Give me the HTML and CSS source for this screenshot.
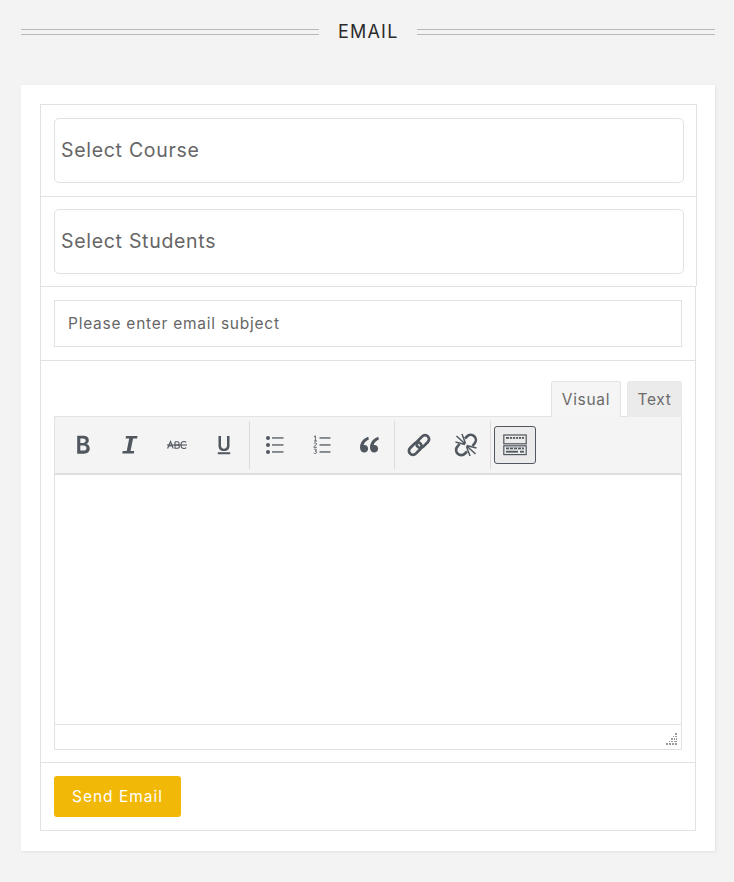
FILE: index.html
```html
<!DOCTYPE html>
<html lang="en">
<head>
<meta charset="utf-8">
<title>Email</title>
<link rel="stylesheet" href="styles.css">
</head>
<body>
<main class="page">
  <header class="heading">
    <span class="rule"></span>
    <h1 class="heading-text">EMAIL</h1>
    <span class="rule"></span>
  </header>
  <section class="card">
    <div class="row row-select row-first">
      <div class="select">Select Course</div>
    </div>
    <div class="row row-select">
      <div class="select">Select Students</div>
    </div>
    <div class="group">
      <div class="row row-subject">
        <div class="subject">Please enter email subject</div>
      </div>
      <div class="row row-editor">
        <div class="tabs">
          <span class="tab tab-active">Visual</span>
          <span class="tab">Text</span>
        </div>
        <div class="editor">
          <div class="toolbar">
            <div class="tool-group tool-group-first">
              <span class="tool">
                <svg class="icon" viewBox="0 0 20 20"><path fill="#50575e" d="M4.200 .8h6.300c3.400 0 5.300 1.600 5.300 4.400 0 1.900-1 3.300-2.700 3.900 2.300.5 3.600 2.100 3.600 4.400 0 3.200-2.300 5.200-5.900 5.200H4.200zm3.100 2.600v4.500h2.700c1.700 0 2.700-.9 2.700-2.300S11.700 3.400 10 3.400zm0 7v5.200h3.100c2 0 3.100-1 3.100-2.600s-1.100-2.600-3.200-2.600z"/></svg>
              </span>
              <span class="tool">
                <svg class="icon" viewBox="0 0 20 20"><path fill="#50575e" d="M6 1h11.500l-.4 2.400h-4L10.500 16h3.700l-.4 2.400H2.300l.4-2.400h4L9.200 3.400H5.600z"/></svg>
              </span>
              <span class="tool">
                <svg class="icon" viewBox="0 0 20 20"><g fill="none" stroke="#50575e" stroke-width="1.100"><path d="M.6 13.500 3.500 6.500 6.300 13.500M1.600 11h3.800"/><path d="M8 6.800v6.400h2.600c1.200 0 1.900-.7 1.900-1.700S11.800 10 10.600 10H8m0 0h2.400c1 0 1.700-.6 1.700-1.600S11.400 6.800 10.400 6.800H8"/><path d="M19.300 7.400c-.6-.6-1.300-.9-2.200-.9-1.900 0-3.100 1.400-3.100 3.500s1.200 3.500 3.100 3.500c.9 0 1.600-.3 2.200-.9"/><path d="M0 10h20"/></g></svg>
              </span>
              <span class="tool">
                <svg class="icon" viewBox="0 0 20 20"><path fill="#50575e" d="M4.500 1h2.500v9.500c0 2 1.100 3.200 3 3.200s3-1.200 3-3.200V1h2.500v9.700c0 3.300-2.100 5.300-5.500 5.300s-5.500-2-5.500-5.300zM3.800 17.300h12.400v1.900H3.800z"/></svg>
              </span>
            </div>
            <div class="tool-group">
              <span class="tool">
                <svg class="icon" viewBox="0 0 20 20"><g fill="#50575e"><circle cx="3" cy="3" r="2"/><circle cx="3" cy="10" r="2"/><circle cx="3" cy="17" r="2"/><rect x="7" y="2.300" width="11.500" height="1.300"/><rect x="7" y="9.300" width="11.500" height="1.300"/><rect x="7" y="16.300" width="11.500" height="1.300"/></g></svg>
              </span>
              <span class="tool">
                <svg class="icon" viewBox="0 0 20 20"><g fill="#50575e"><rect x="7.500" y="2.300" width="11" height="1.300"/><rect x="7.500" y="9.300" width="11" height="1.300"/><rect x="7.500" y="16.300" width="11" height="1.300"/></g><g fill="none" stroke="#50575e" stroke-width=".9"><path d="M2 1.800 3.400 .8v5.200M2 6h3"/><path d="M1.800 8.600c.4-1 2.800-1 2.800.4 0 1.100-2.800 2-2.800 3.300h3"/><path d="M1.900 14.500c.7-.7 2.600-.6 2.600.6 0 .7-.6 1-1.400 1 .9 0 1.600.4 1.600 1.200 0 1.300-2.200 1.500-3 .7"/></g></svg>
              </span>
              <span class="tool">
                <svg class="icon" viewBox="0 0 20 20"><g fill="#50575e"><path d="M9.200 1.800C5 3.300 1 7 1 12.600c0 3 1.800 5 4.200 5 2.200 0 3.900-1.700 3.900-3.900 0-2.100-1.500-3.700-3.500-3.700-.3 0-.7 0-1 .1.700-2.300 2.700-4.300 5.300-5.500z"/><path d="M19.200 1.800C15 3.300 11 7 11 12.600c0 3 1.800 5 4.200 5 2.200 0 3.900-1.700 3.900-3.900 0-2.100-1.500-3.700-3.500-3.700-.3 0-.7 0-1 .1.700-2.300 2.700-4.300 5.300-5.500z"/></g></svg>
              </span>
            </div>
            <div class="tool-group tool-group-links">
              <span class="tool">
                <svg class="icon-lg" viewBox="0 0 24 24"><g fill="none" stroke="#50575e" stroke-width="2.800"><rect x="1" y="11.500" width="14.500" height="8" rx="4" transform="rotate(-45 8.250 15.500)"/><rect x="8.500" y="4.500" width="14.500" height="8" rx="4" transform="rotate(-45 15.750 8.500)"/></g></svg>
              </span>
              <span class="tool">
                <svg class="icon-lg" viewBox="0 0 24 24"><g fill="none" stroke="#50575e"><path stroke-width="2.600" d="M11 5.500 13 3.500a5 5 0 0 1 7.500 7L18.500 13"/><path stroke-width="2.600" d="M13 18.500 11 20.500a5 5 0 0 1-7.500-7L5.500 11"/><path stroke-width="1.500" d="M11 11.500 1.500 9M11.200 11 2.500 3M11.500 10.500 8 1M12.500 12.500 22.500 15M12.800 13 21.500 21M12.500 13.500 16 23"/></g></svg>
              </span>
            </div>
            <div class="tool-group tool-group-last">
              <span class="tool tool-on">
                <svg class="icon-kbd" viewBox="0 0 24 22"><g fill="none" stroke="#50575e" stroke-width="1.200"><rect x=".8" y="1" width="22.400" height="8.800"/><rect x=".8" y="11.800" width="22.400" height="8.800"/></g><g fill="#50575e"><rect x="3" y="3" width="18" height="1.800"/><rect x="3" y="13.500" width="18" height="1.800"/><rect x="3" y="16.800" width="12" height="1.800"/><rect x="17" y="16.800" width="4" height="1.800"/></g><g fill="#ebebeb"><rect x="6" y="3" width="1" height="1.800"/><rect x="9" y="3" width="1" height="1.800"/><rect x="12" y="3" width="1" height="1.800"/><rect x="15" y="3" width="1" height="1.800"/><rect x="18" y="3" width="1" height="1.800"/><rect x="6" y="13.500" width="1" height="1.800"/><rect x="10" y="13.500" width="1" height="1.800"/><rect x="14" y="13.500" width="1" height="1.800"/><rect x="18" y="13.500" width="1" height="1.800"/></g></svg>
              </span>
            </div>
          </div>
          <div class="edit-area"></div>
          <div class="statusbar">
            <svg class="grip" viewBox="0 0 12 12"><g fill="#9a9a9a"><rect x="9" y="0" width="2" height="2"/><rect x="7" y="3" width="1" height="1"/><rect x="9" y="3" width="2" height="1"/><rect x="5" y="5" width="2" height="2"/><rect x="8" y="5" width="1" height="2"/><rect x="10" y="5" width="1" height="2"/><rect x="3" y="8" width="1" height="1"/><rect x="5" y="8" width="2" height="1"/><rect x="8" y="8" width="3" height="1"/><rect x="0" y="10" width="2" height="2"/><rect x="3" y="10" width="2" height="2"/><rect x="6" y="10" width="2" height="2"/><rect x="9" y="10" width="2" height="2"/></g></svg>
          </div>
        </div>
      </div>
      <div class="row row-action">
        <button class="send" type="button">Send Email</button>
      </div>
    </div>
  </section>
</main>
</body>
</html>
```
FILE: styles.css
```css
* { box-sizing: border-box; }
html, body { margin: 0; padding: 0; }
body {
  background: #f3f3f3;
  font-family: Inter, "Open Sans", "Liberation Sans", sans-serif;
  color: #666;
}
.page { width: 734px; height: 882px; padding: 0 19px 0 21px; }
.heading {
  display: flex;
  align-items: center;
  gap: 19px;
  height: 85px;
  padding-bottom: 21px;
}
.rule {
  flex: 1;
  height: 6px;
  margin-top: -1px;
  border-top: 1px solid #b9b9b9;
  border-bottom: 1px solid #b9b9b9;
}
.heading-text {
  margin: 0;
  width: 60px;
  text-align: center;
  font-size: 18px;
  font-weight: 400;
  letter-spacing: 1.200px;
  line-height: 24px;
  white-space: nowrap;
  color: #2b2b2b;
}
.card {
  height: 766px;
  padding: 19px 18px 0 19px;
  background: #fff;
  box-shadow: 1px 1px 3px rgba(0, 0, 0, .08);
}
.row { border-top: 1px solid #e2e2e2; }
.row-select {
  height: 92px;
  padding: 13px 12px 0 13px;
  border-left: 1px solid #e2e2e2;
  border-right: 1px solid #e2e2e2;
}
.row-select + .row-select { height: 90px; padding-top: 12px; }
.select {
  display: flex;
  align-items: center;
  height: 65px;
  padding: 0 0 2px 6px;
  border: 1px solid #e2e2e2;
  border-radius: 5px;
  font-size: 19.500px;
  letter-spacing: .7px;
  color: #666;
}
.group {
  width: 656px;
  border: 1px solid #e2e2e2;
  border-top: 0;
}
.row-subject {
  height: 74px;
  padding: 13px 13px 0;
}
.subject {
  display: flex;
  align-items: center;
  height: 47px;
  padding: 0 0 1px 13px;
  border: 1px solid #e2e2e2;
  font-size: 15.500px;
  letter-spacing: .75px;
  color: #666;
}
.row-editor {
  height: 402px;
  padding: 20px 13px 0;
}
.tabs {
  display: flex;
  justify-content: flex-end;
  gap: 6px;
  height: 36px;
  margin-bottom: -1px;
}
.tab {
  display: flex;
  align-items: center;
  justify-content: center;
  width: 55px;
  height: 36px;
  padding-bottom: 1px;
  background: #ebebeb;
  border: 1px solid #e8e8e8;
  border-bottom: 0;
  border-radius: 3px 3px 0 0;
  font-size: 15.500px;
  letter-spacing: .7px;
  color: #6a6a6a;
}
.tab-active {
  position: relative;
  z-index: 1;
  width: 70px;
  background: #f5f5f5;
  border-color: #e2e2e2;
}
.editor {
  display: flex;
  flex-direction: column;
  height: 334px;
  border: 1px solid #e2e2e2;
  background: #fff;
}
.toolbar {
  display: flex;
  align-items: center;
  height: 58px;
  padding-left: 7px;
  background: #f4f4f4;
  border-bottom: 2px solid #dedede;
}
.tool-group {
  display: flex;
  align-items: center;
  gap: 5px;
  height: 48px;
  padding: 0 4px;
  border-right: 1px solid #dcdcdc;
}
.tool-group-first { padding-left: 0; }
.tool-group-links { padding: 0 3px; }
.tool-group-last { padding: 0 3px; border-right: 0; }
.tool {
  display: flex;
  align-items: center;
  justify-content: center;
  width: 42px;
  height: 38px;
}
.tool-on {
  background: #ebebeb;
  border: 1px solid #50575e;
  border-radius: 3px;
}
.icon { width: 20px; height: 20px; }
.icon-lg { width: 24px; height: 24px; }
.icon-kbd { width: 24px; height: 22px; }
.edit-area { flex: 1; }
.statusbar {
  display: flex;
  justify-content: flex-end;
  align-items: flex-end;
  height: 25px;
  padding: 0 3px 4px 0;
  border-top: 1px solid #e2e2e2;
}
.grip { width: 12px; height: 12px; }
.row-action { padding: 13px 13px 0; height: 68px; }
.send {
  display: block;
  width: 127px;
  height: 41px;
  padding: 0;
  border: 0;
  border-radius: 3px;
  background: #f2b807;
  color: #fff;
  font-family: inherit;
  font-size: 15.500px;
  letter-spacing: 1px;
}
```
